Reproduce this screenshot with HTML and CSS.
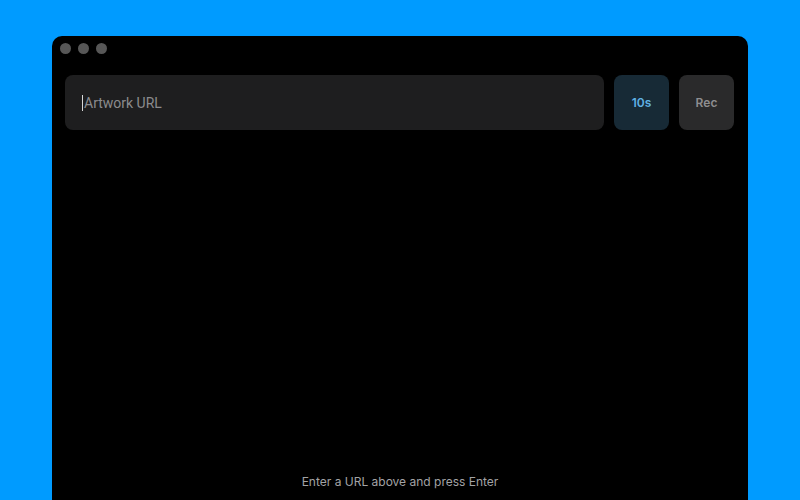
FILE: index.html
```html
<!DOCTYPE html>
<html>
<head>
<meta charset="utf-8">
<link rel="stylesheet" href="styles.css">
</head>
<body>
<div class="window">
  <div class="titlebar">
    <span class="light"></span><span class="light"></span><span class="light"></span>
  </div>
  <div class="toolbar">
    <div class="url-field"><span class="caret"></span><span class="placeholder">Artwork URL</span></div>
    <button class="btn btn-duration">10s</button>
    <button class="btn btn-rec">Rec</button>
  </div>
  <div class="stage"></div>
  <div class="hint">Enter a URL above and press Enter</div>
</div>
</body>
</html>
```
FILE: styles.css
```css
html, body {
  margin: 0;
  padding: 0;
  height: 500px;
  overflow: hidden;
}
body {
  background: #009bff;
  font-family: Inter, "Liberation Sans", sans-serif;
  padding-top: 36px;
  box-sizing: border-box;
}
.window {
  margin-left: 52px;
  width: 696px;
  height: 464px;
  background: #000;
  border-radius: 10px 10px 0 0;
  display: flex;
  flex-direction: column;
}
.titlebar {
  display: flex;
  gap: 7.3px;
  padding: 7px 0 0 7.5px;
  height: 11px;
}
.light {
  width: 11px;
  height: 11px;
  border-radius: 50%;
  background: #575757;
}
.toolbar {
  display: flex;
  gap: 10px;
  margin-top: 21px;
  padding: 0 14px 0 13px;
  height: 55px;
}
.url-field {
  flex: 1;
  background: #1e1e1f;
  border-radius: 8px;
  display: flex;
  align-items: center;
  padding-left: 16.5px;
}
.caret {
  width: 1.5px;
  height: 16px;
  background: #d8d8d8;
  margin-right: 1px;
}
.placeholder {
  color: #8b8b8d;
  font-family: Roboto, "Liberation Sans", sans-serif;
  font-size: 14px;
}
.btn {
  width: 55px;
  height: 55px;
  border: none;
  border-radius: 8px;
  font-family: Inter, "Liberation Sans", sans-serif;
  font-size: 12px;
  font-weight: 600;
  padding: 0;
}
.btn-duration {
  background: #172a36;
  color: #5fb1e4;
}
.btn-rec {
  background: #2a2a2b;
  color: #8e8e90;
}
.stage {
  flex: 1;
}
.hint {
  text-align: center;
  color: #a3a3a5;
  font-size: 12px;
  line-height: 16px;
  padding-bottom: 10px;
}
```
